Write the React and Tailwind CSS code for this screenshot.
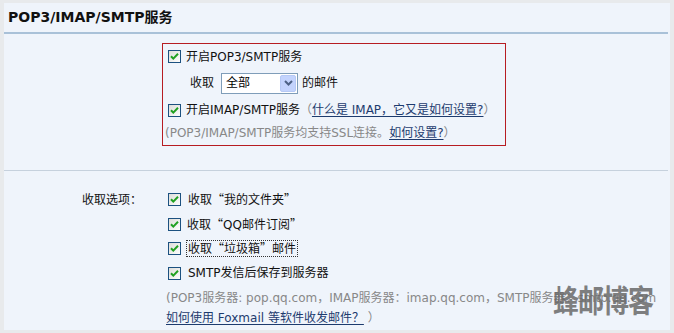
import React from "react";

const font = { fontFamily: '"DejaVu Sans", "Noto Sans CJK SC", sans-serif' };
const cjk = { fontFamily: '"Noto Sans CJK SC", sans-serif' };

function Q({ children }) {
  return <span style={cjk}>{children}</span>;
}

function Check() {
  return (
    <svg width="13" height="13" viewBox="0 0 13 13" className="shrink-0">
      <defs>
        <linearGradient id="cbg" x1="0" y1="0" x2="1" y2="1">
          <stop offset="0" stopColor="#dcdcd7" />
          <stop offset="1" stopColor="#ffffff" />
        </linearGradient>
      </defs>
      <rect x="0.5" y="0.5" width="12" height="12" fill="url(#cbg)" stroke="#1c5180" />
      <path d="M3 6.2 L5.3 8.6 L10 3.8" stroke="#21a121" strokeWidth="2" fill="none" />
    </svg>
  );
}

function Select() {
  return (
    <div className="flex items-center w-[77px] h-[21px] border border-[#7f9db9] bg-white">
      <span className="flex-1 pl-[4px] text-[12px] text-black leading-none">全部</span>
      <div className="w-[16px] h-[17px] mr-[1px] rounded-[2px] bg-[#c3d3fd] border border-[#b6c9f5] flex items-center justify-center">
        <svg width="9" height="6" viewBox="0 0 9 6">
          <path d="M1 1 L4.5 4.5 L8 1" stroke="#4d6185" strokeWidth="2" fill="none" />
        </svg>
      </div>
    </div>
  );
}

export default function App() {
  return (
    <div
      className="relative w-[674px] h-[333px] bg-[#e8eaec] pl-[4px] pr-[4px] pt-[3px] pb-[3px] overflow-hidden text-[12px] text-[#111]"
      style={font}
    >
      <div className="h-full bg-[#eff4fb] flex flex-col">
        <div className="h-[29px] flex items-center pl-[4px] text-[14px] font-bold text-[#111]">
          POP3/IMAP/SMTP服务
        </div>
        <div className="h-[2px] bg-[#a9c1d8] mr-[2px]" />
        <div className="h-[136px] pt-[9px] pl-[158px]">
          <div className="w-[344px] h-[103px] border border-[#b71c22] flex flex-col pl-[5px]">
            <div className="h-[25px] flex items-center gap-[5px]">
              <Check />
              <span>开启POP3/SMTP服务</span>
            </div>
            <div className="h-[28px] flex items-center pl-[22px]">
              <span className="mr-[7px]">收取</span>
              <Select />
              <span className="ml-[4px]">的邮件</span>
            </div>
            <div className="h-[26px] flex items-center gap-[5px]">
              <Check />
              <span>
                开启IMAP/SMTP服务
                <span className="text-[#888]">（</span>
                <span className="text-[#1d3b6e] underline underline-offset-2">什么是 IMAP，它又是如何设置?</span>
                <span className="text-[#888]">）</span>
              </span>
            </div>
            <div className="h-[19px] flex items-center -ml-[3px] text-[#888]">
              <span>
                (POP3/IMAP/SMTP服务均支持SSL连接。
                <span className="text-[#1d3b6e] underline underline-offset-2">如何设置?</span>
                <span>）</span>
              </span>
            </div>
          </div>
        </div>
        <div className="h-[1px] bg-[#c6d1dd] mr-[2px]" />
        <div className="flex pt-[16px]">
          <div className="w-[162px] pl-[78px] h-[25px] flex items-center">收取选项：</div>
          <div className="flex flex-col">
            <div className="h-[25px] flex items-center gap-[7px] pl-[2px]">
              <Check />
              <span>收取<Q>“</Q>我的文件夹<Q>”</Q></span>
            </div>
            <div className="h-[24px] flex items-center gap-[6px] pl-[2px]">
              <Check />
              <span>收取<Q>“</Q>QQ邮件订阅<Q>”</Q></span>
            </div>
            <div className="h-[25px] flex items-center gap-[5px] pl-[2px]">
              <Check />
              <span className="border border-dotted border-[#333] px-[1px] leading-[14px]">收取<Q>“</Q>垃圾箱<Q>”</Q>邮件</span>
            </div>
            <div className="h-[24px] flex items-center gap-[7px] pl-[2px]">
              <Check />
              <span>SMTP发信后保存到服务器</span>
            </div>
            <div className="h-[26px] flex items-center text-[#888] whitespace-nowrap">
              (POP3服务器: pop.qq.com，IMAP服务器：imap.qq.com，SMTP服务器：smtp.qq.com
            </div>
            <div className="h-[14px] flex items-center whitespace-nowrap">
              <span className="text-[#1d3b6e] underline underline-offset-2">如何使用 Foxmail 等软件收发邮件？</span>
              <span className="text-[#888]">&nbsp;）</span>
            </div>
          </div>
        </div>
      </div>
      <div
        className="absolute left-[553px] top-[283px] text-[26px] font-bold text-[#6a6a6a] opacity-85 leading-none tracking-[-1px] origin-top scale-y-[1.2]"
        style={cjk}
      >
        蜂邮博客
      </div>
    </div>
  );
}
